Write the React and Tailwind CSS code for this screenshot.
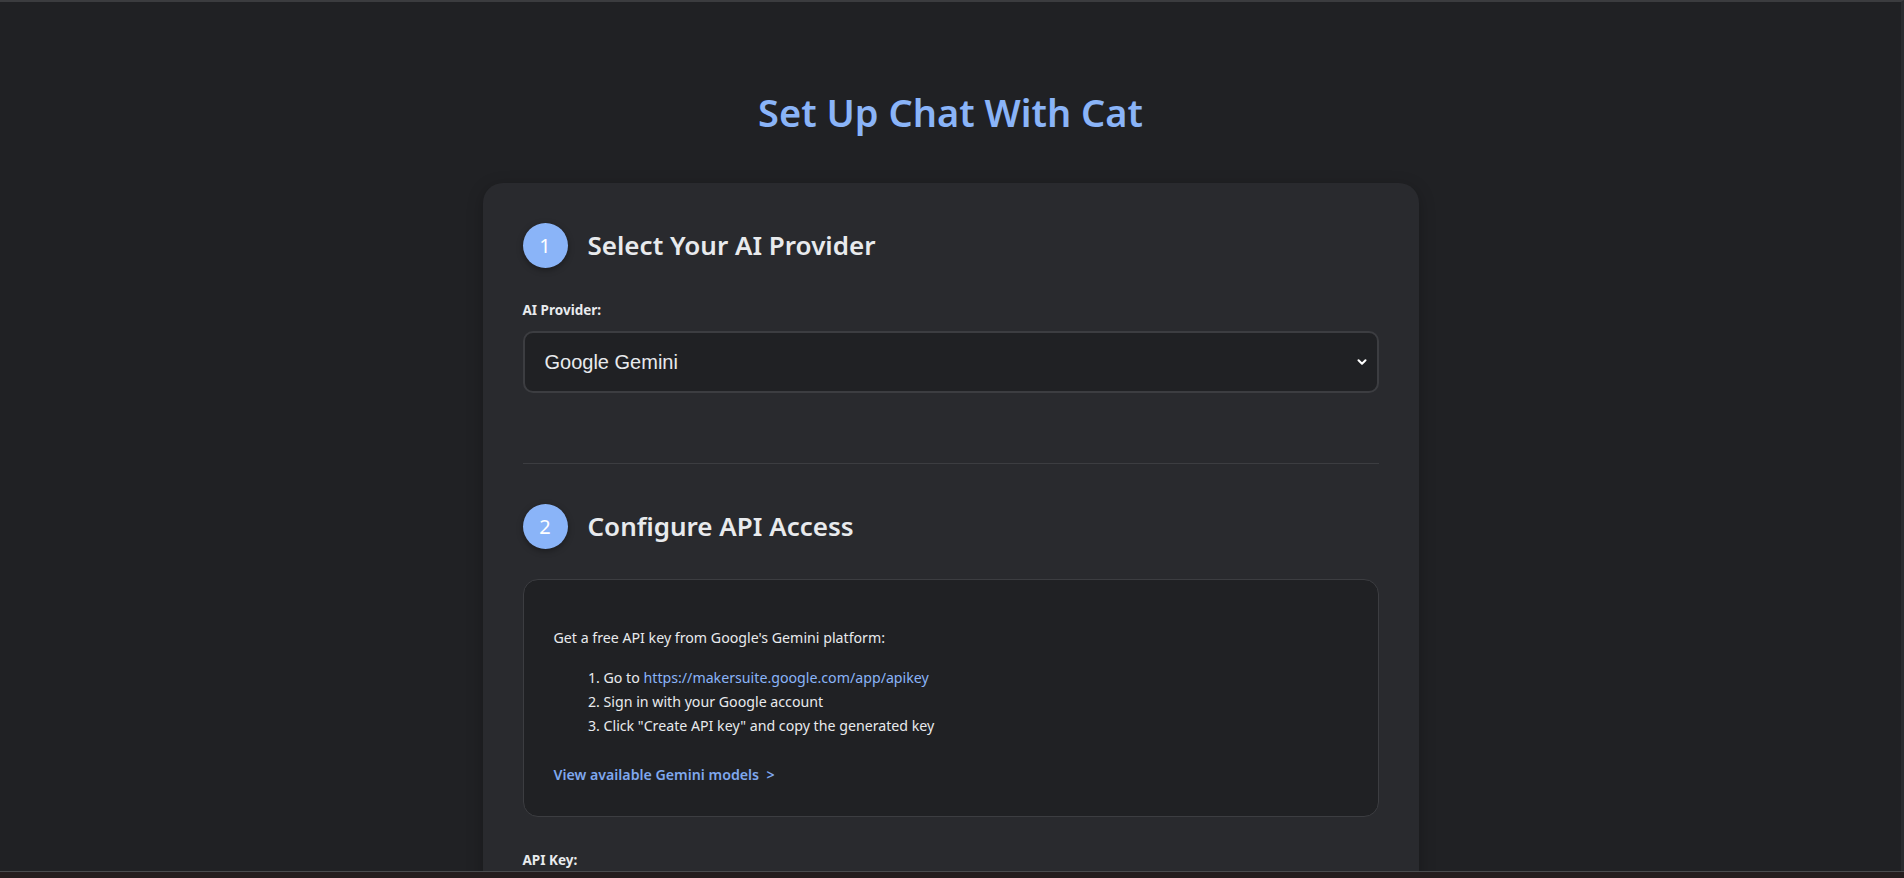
import { ChevronDown } from "lucide-react"

function StepHeader({ num, title }) {
  return (
    <div className="flex items-center gap-5">
      <div className="w-[45px] h-[45px] rounded-full bg-[#8ab4f8] text-white flex items-center justify-center text-[20px] shadow-[0_2px_6px_rgba(0,0,0,0.35)]">
        {num}
      </div>
      <h2 className="text-[26px] font-semibold text-[#e8eaed] leading-tight">{title}</h2>
    </div>
  )
}

export default function App() {
  return (
    <div className="min-h-screen bg-[#202124] text-[#e8eaed] font-['Noto_Sans','Open_Sans',sans-serif] border-t-2 border-r-[3px] border-[#3b3c3f] border-r-[#2a2b2e]">
      <h1 className="pt-[86px] pb-[47px] text-center text-[38px] font-semibold leading-[48px] text-[#8ab4f8]">
        Set Up Chat With Cat
      </h1>

      <div className="mx-auto w-[936px] bg-[#292a2e] rounded-[20px] p-10 shadow-[0_4px_16px_rgba(0,0,0,0.25)]">
        <StepHeader num="1" title="Select Your AI Provider" />

        <label className="block mt-[33px] mb-[11px] text-[13.5px] font-bold leading-[19px]">AI Provider:</label>
        <div className="relative">
          <select className="w-full h-[62px] appearance-none bg-[#202124] border-2 border-[#3c3d41] rounded-[10px] pl-[20px] pr-10 text-[20px] text-[#e8eaed] font-['Liberation_Sans',Arial,sans-serif] outline-none">
            <option>Google Gemini</option>
          </select>
          <ChevronDown className="absolute right-[10px] top-1/2 -translate-y-1/2 w-[14px] h-[14px] text-white pointer-events-none" strokeWidth={3.5} />
        </div>

        <div className="mt-[70px] border-t border-[#3c3d41]" />

        <div className="mt-10">
          <StepHeader num="2" title="Configure API Access" />
        </div>

        <div className="mt-[30px] bg-[#202124] border border-[#3c3d41] rounded-[15px] px-[30px] pt-[46px] pb-[29px] text-[14.2px] leading-6">
          <p>Get a free API key from Google's Gemini platform:</p>
          <ol className="list-decimal pl-[50px] mt-4 mb-[25px]">
            <li>
              Go to <a href="#" className="text-[#8ab4f8]">https://makersuite.google.com/app/apikey</a>
            </li>
            <li>Sign in with your Google account</li>
            <li>Click "Create API key" and copy the generated key</li>
          </ol>
          <a href="#" className="font-semibold text-[#7fa8ee]">
            View available Gemini models&nbsp; &gt;
          </a>
        </div>

        <label className="block mt-[34px] text-[13.5px] font-bold leading-[19px]">API Key:</label>
        <div className="h-[62px]" />
      </div>

      <div className="fixed bottom-0 left-0 right-0 h-[7px] bg-[#251d1e] border-t border-[#4a4b4e]" />
    </div>
  )
}
